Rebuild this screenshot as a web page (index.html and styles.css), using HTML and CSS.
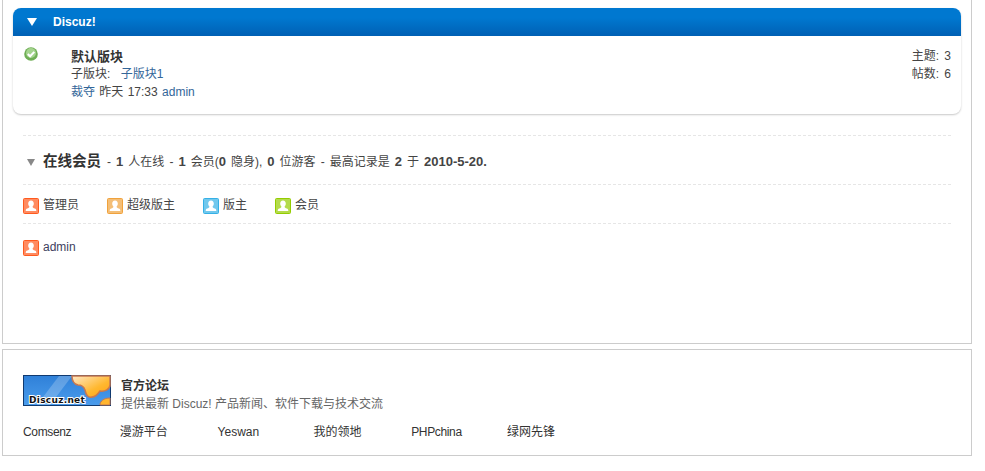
FILE: index.html
```html
<!DOCTYPE html>
<html lang="zh">
<head>
<meta charset="utf-8">
<title>Discuz!</title>
<link rel="stylesheet" href="styles.css">
</head>
<body>
<svg class="defs" width="0" height="0" aria-hidden="true">
  <symbol id="user" viewBox="0 0 16 16">
    <rect x="0.5" y="0.5" width="15" height="15" rx="1" fill="currentColor" fill-opacity="0.7" stroke="currentColor"/>
    <path d="M8 2.500c1.900 0 2.800 1.400 2.800 3.100 0 1.400-.5 2.500-1.300 3.200.2.900 1 1.300 2.300 1.800 1 .4 1.500.9 1.500 2.400H2.700c0-1.500.5-2 1.500-2.400 1.300-.5 2.100-.9 2.300-1.800C5.700 8.100 5.200 7 5.200 5.600c0-1.700.9-3.100 2.800-3.100z" fill="#fff"/>
  </symbol>
</svg>
<main class="wrap">
  <section class="board">
    <h2 class="board-head"><span class="tri-white"></span><span class="head-text">Discuz!</span></h2>
    <div class="forum">
      <svg class="status" viewBox="0 0 14 14" width="14" height="14">
        <circle cx="7" cy="7" r="6.800" fill="#6fae55"/>
        <circle cx="7" cy="6" r="5" fill="#a4d48e"/>
        <path d="M3.800 7l2.300 2.300 4.200-4.400" fill="none" stroke="#fff" stroke-width="2"/>
      </svg>
      <div class="forum-main">
        <h3 class="forum-name">默认版块</h3>
        <p class="line">子版块: <a class="link sub" href="#">子版块1</a></p>
        <p class="line"><a class="link" href="#">裁夺</a> 昨天 17:33 <a class="link" href="#">admin</a></p>
      </div>
      <div class="stats">
        <p class="line">主题: 3</p>
        <p class="line">帖数: 6</p>
      </div>
    </div>
  </section>

  <section class="online">
    <div class="online-title">
      <span class="tri-grey"></span>
      <h3 class="online-h">在线会员</h3>
      <span class="online-text"> - <b>1</b> 人在线 - <b>1</b> 会员(<b>0</b> 隐身), <b>0</b> 位游客 - 最高记录是 <b>2</b> 于 <b>2010-5-20.</b></span>
    </div>
    <ul class="legend">
      <li class="who"><svg class="ic red"><use href="#user"/></svg>管理员</li>
      <li class="who"><svg class="ic amber"><use href="#user"/></svg>超级版主</li>
      <li class="who"><svg class="ic sky"><use href="#user"/></svg>版主</li>
      <li class="who"><svg class="ic lime"><use href="#user"/></svg>会员</li>
    </ul>
    <ul class="members">
      <li class="who"><svg class="ic red"><use href="#user"/></svg><a class="member" href="#">admin</a></li>
    </ul>
  </section>
</main>

<footer class="foot">
  <div class="foot-top">
    <svg class="logo" viewBox="0 0 88 31" width="88" height="31">
      <defs>
        <linearGradient id="sky" x1="0" y1="0" x2="0" y2="1">
          <stop offset="0" stop-color="#2f80d8"/>
          <stop offset="1" stop-color="#4a9cec"/>
        </linearGradient>
        <linearGradient id="cloud" x1="0" y1="0" x2="1" y2="1">
          <stop offset="0" stop-color="#ffe8c8"/>
          <stop offset="0.6" stop-color="#ffb830"/>
          <stop offset="1" stop-color="#ffa010"/>
        </linearGradient>
      </defs>
      <rect x="0.500" y="0.500" width="87" height="30" fill="url(#sky)" stroke="#103a70"/>
      <path d="M14 30L36 1h13L27 30z" fill="#fff" fill-opacity="0.22"/>
      <path d="M49 1c0 5 2 8 6 9 4 0 6 2 7 5 1 5 3 8 7 7 4 0 6-3 8-6 5 1 10-2 10-6V1z" fill="url(#cloud)" stroke="#c87850" stroke-width="1.500"/>
      <path d="M77 30c0-4 4-7 10-7v7z" fill="#ffb52e" stroke="#c87850"/>
      <text class="logo-text" x="6" y="27.500">Discuz.net</text>
    </svg>
    <div class="foot-info">
      <h3 class="foot-title">官方论坛</h3>
      <p class="foot-desc">提供最新 Discuz! 产品新闻、软件下载与技术交流</p>
    </div>
  </div>
  <ul class="foot-links">
    <li class="foot-link tight">Comsenz</li>
    <li class="foot-link">漫游平台</li>
    <li class="foot-link shift">Yeswan</li>
    <li class="foot-link">我的领地</li>
    <li class="foot-link tight shift">PHPchina</li>
    <li class="foot-link">绿网先锋</li>
  </ul>
</footer>
</body>
</html>
```

FILE: styles.css
```css
* { box-sizing: border-box; }
html, body { margin: 0; padding: 0; background: #fff; }
body {
  font: 12px/17.500px "Liberation Sans", "Noto Sans CJK SC", sans-serif;
  color: #444;
  overflow: hidden;
  height: 471px;
}
h2, h3, p, ul { margin: 0; padding: 0; }
ul { list-style: none; }
.defs { position: absolute; }

.wrap {
  width: 970px;
  height: 344px;
  margin-left: 2px;
  padding: 8px 10px 0;
  border: 1px solid #ccc;
  border-top: 0;
}
.board {
  width: 948px;
  height: 106px;
  border-radius: 8px;
  box-shadow: 0 1px 2px rgba(0, 0, 0, 0.22);
  background: #fff;
}
.board-head {
  display: flex;
  align-items: center;
  height: 28px;
  padding-left: 14px;
  border-radius: 8px 8px 0 0;
  background: linear-gradient(#0078d0 0, #0078d0 35%, #0060b4 100%);
  color: #fff;
  font-size: 12px;
  font-weight: bold;
}
.head-text { padding-top: 1px; }
.tri-white {
  width: 0;
  height: 0;
  margin-right: 16px;
  border: 5px solid transparent;
  border-top: 8px solid #fff;
  border-bottom: 0;
}
.forum {
  display: flex;
  align-items: flex-start;
  padding: 11px 10px 0 11px;
}
.status { flex: none; margin-right: 33px; }
.forum-main { flex: 1; padding-top: 1px; word-spacing: 1px; }
.forum-name { font-size: 13px; color: #333; line-height: 18px; }
.line { color: #444; }
.link { color: #369; text-decoration: none; }
.sub { margin-left: 6px; }
.stats { text-align: right; line-height: 18px; word-spacing: 2px; }
.stats .line { line-height: 18px; }

.online { padding: 21px 10px 0; }
.online-title {
  display: flex;
  align-items: center;
  height: 50px;
  padding-top: 4px;
  border-top: 1px dashed #e6e6e6;
  border-bottom: 1px dashed #e6e6e6;
  white-space: pre;
}
.tri-grey {
  width: 0;
  height: 0;
  margin: 0 8px 0 4px;
  border: 4px solid transparent;
  border-top: 7px solid #888;
  border-bottom: 0;
}
.online-h { font-size: 14.500px; color: #333; font-weight: bold; }
.online-text { margin-left: 1px; word-spacing: 1.700px; }
.online-text b { font-size: 13px; }
.legend {
  display: flex;
  gap: 28px;
  height: 39px;
  padding-top: 4px;
  align-items: center;
  border-bottom: 1px dashed #e6e6e6;
}
.who { display: flex; align-items: center; }
.ic { width: 16px; height: 16px; margin-right: 4px; flex: none; }
.red { color: #ff5a1e; }
.amber { color: #f0a23c; }
.sky { color: #35b0e6; }
.lime { color: #94cc00; }
.members { padding-top: 15px; }
.member { color: #404060; text-decoration: none; }

.foot {
  width: 970px;
  height: 107px;
  margin: 5px 0 0 2px;
  padding: 25px 20px 0;
  border: 1px solid #ccc;
}
.foot-top { display: flex; align-items: flex-start; gap: 10px; }
.logo { flex: none; display: block; }
.logo-text {
  font: bold 9px "DejaVu Sans", sans-serif;
  letter-spacing: 0.300px;
  fill: #111;
  stroke: #fff;
  stroke-width: 2px;
  paint-order: stroke;
}
.foot-info { margin-top: 2px; }
.foot-title { font-size: 12px; line-height: 18px; color: #333; }
.foot-desc { color: #666; line-height: 18px; }
.foot-links {
  display: grid;
  grid-template-columns: repeat(6, 96.800px);
  margin-top: 11px;
  color: #333;
}
.tight { letter-spacing: -0.350px; }
.shift { padding-left: 1px; }
```
